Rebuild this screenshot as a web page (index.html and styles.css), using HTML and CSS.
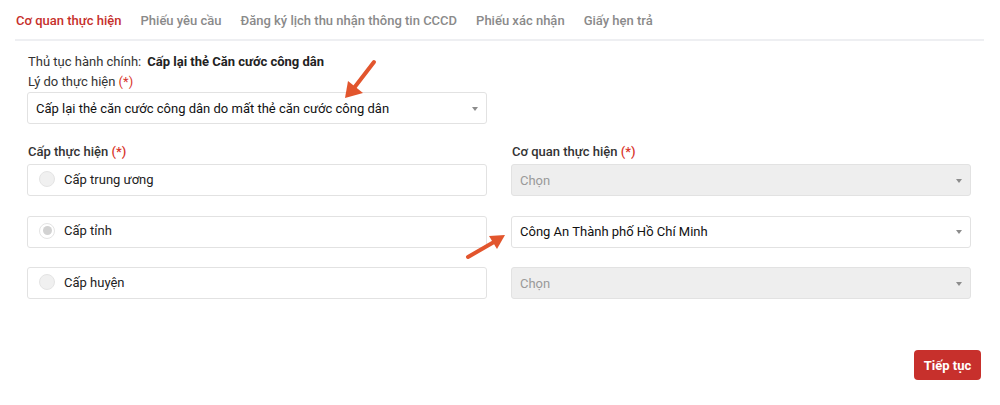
FILE: index.html
```html
<!DOCTYPE html>
<html lang="vi">
<head>
<meta charset="utf-8">
<title>Cơ quan thực hiện</title>
<link rel="stylesheet" href="styles.css">
</head>
<body>
<div class="page">
  <nav class="tabs">
    <span class="tab active">Cơ quan thực hiện</span>
    <span class="tab">Phiếu yêu cầu</span>
    <span class="tab">Đăng ký lịch thu nhận thông tin CCCD</span>
    <span class="tab">Phiếu xác nhận</span>
    <span class="tab">Giấy hẹn trả</span>
  </nav>

  <div class="form">
    <div class="info">Thủ tục hành chính:<b class="proc">Cấp lại thẻ Căn cước công dân</b></div>
    <div class="label">Lý do thực hiện <span class="req">(*)</span></div>
    <div class="select wide">
      <span class="value">Cấp lại thẻ căn cước công dân do mất thẻ căn cước công dân</span>
      <span class="caret"></span>
    </div>

    <div class="cols">
      <div class="col">
        <div class="label strong">Cấp thực hiện <span class="req">(*)</span></div>
        <div class="list">
          <div class="radio-box"><span class="radio"></span><span>Cấp trung ương</span></div>
          <div class="radio-box"><span class="radio checked"></span><span>Cấp tỉnh</span></div>
          <div class="radio-box"><span class="radio"></span><span>Cấp huyện</span></div>
        </div>
      </div>
      <div class="col">
        <div class="label strong">Cơ quan thực hiện <span class="req">(*)</span></div>
        <div class="list">
          <div class="select disabled"><span class="value">Chọn</span><span class="caret"></span></div>
          <div class="select"><span class="value">Công An Thành phố Hồ Chí Minh</span><span class="caret"></span></div>
          <div class="select disabled"><span class="value">Chọn</span><span class="caret"></span></div>
        </div>
      </div>
    </div>
  </div>

  <div class="actions">
    <button class="btn">Tiếp tục</button>
  </div>

  <svg class="arrows" width="1000" height="405" viewBox="0 0 1000 405">
    <g stroke="#e2552d" stroke-width="4" stroke-linecap="round" fill="#e2552d">
      <line x1="374" y1="62" x2="354" y2="88"/>
      <polygon points="345,98 348,81 363,93" stroke="none"/>
      <line x1="468" y1="257" x2="494" y2="242"/>
      <polygon points="505,235 489,236 497,249" stroke="none"/>
    </g>
  </svg>
</div>
</body>
</html>
```

FILE: styles.css
```css
* { box-sizing: border-box; }

html, body {
  margin: 0;
  padding: 0;
  background: #fff;
}

body {
  font-family: Roboto, "Liberation Sans", Arial, sans-serif;
  font-size: 13px;
  color: #222;
}

.page {
  position: relative;
  width: 1000px;
  height: 405px;
  overflow: hidden;
}

.tabs {
  display: flex;
  gap: 19px;
  height: 41px;
  margin: 0 16px 0 15px;
  padding: 2px 0 0 1px;
  align-items: center;
  border-bottom: 2px solid #eeeff2;
}

.tab {
  color: #8a8a8a;
  font-weight: 500;
}

.tab.active {
  color: #c6302b;
}

.form {
  padding: 10px 29px 0 27px;
}

.info {
  height: 21px;
  line-height: 21px;
  padding-left: 1px;
  color: #333;
}

.proc {
  margin-left: 6px;
  font-weight: bold;
  color: #222;
}

.label {
  height: 20px;
  line-height: 20px;
  padding-left: 1px;
  color: #333;
}

.label.strong {
  font-weight: 500;
  color: #333;
}

.req {
  color: #d8352b;
}

.select {
  display: flex;
  align-items: center;
  justify-content: space-between;
  height: 32px;
  padding: 0 8px 0 8px;
  border: 1px solid #e2e2e2;
  border-radius: 3px;
  background: #fff;
  color: #111;
}

.select.wide {
  width: 460px;
}

.select.disabled {
  background: #eeeeee;
  color: #9a9a9a;
}

.caret {
  width: 0;
  height: 0;
  border-left: 3.5px solid transparent;
  border-right: 3.5px solid transparent;
  border-top: 4px solid #8c8c8c;
  margin-top: 1px;
}

.cols {
  display: grid;
  grid-template-columns: 460px 460px;
  column-gap: 24px;
  margin-top: 18px;
}

.col .label {
  margin-bottom: 2px;
}

.list {
  display: flex;
  flex-direction: column;
  gap: 19.5px;
}

.radio-box {
  display: flex;
  align-items: center;
  gap: 9px;
  height: 32px;
  padding: 0 0 2px 11px;
  border: 1px solid #e2e2e2;
  border-radius: 3px;
  color: #222;
}

.radio {
  width: 16px;
  height: 16px;
  border-radius: 50%;
  background: #f0f0f0;
  border: 1px solid #e4e4e4;
  display: flex;
  align-items: center;
  justify-content: center;
}

.radio.checked {
  background: #fff;
}

.radio.checked::after {
  content: "";
  width: 9px;
  height: 9px;
  border-radius: 50%;
  background: #d2d2d2;
}

.actions {
  display: flex;
  justify-content: flex-end;
  padding-right: 19px;
  margin-top: 51px;
}

.btn {
  font-family: inherit;
  font-size: 13px;
  font-weight: bold;
  color: #fff;
  background: #c7302c;
  border: none;
  border-radius: 4px;
  height: 30px;
  width: 67px;
  padding: 0;
}

.arrows {
  position: absolute;
  left: 0;
  top: 0;
  pointer-events: none;
}
```
